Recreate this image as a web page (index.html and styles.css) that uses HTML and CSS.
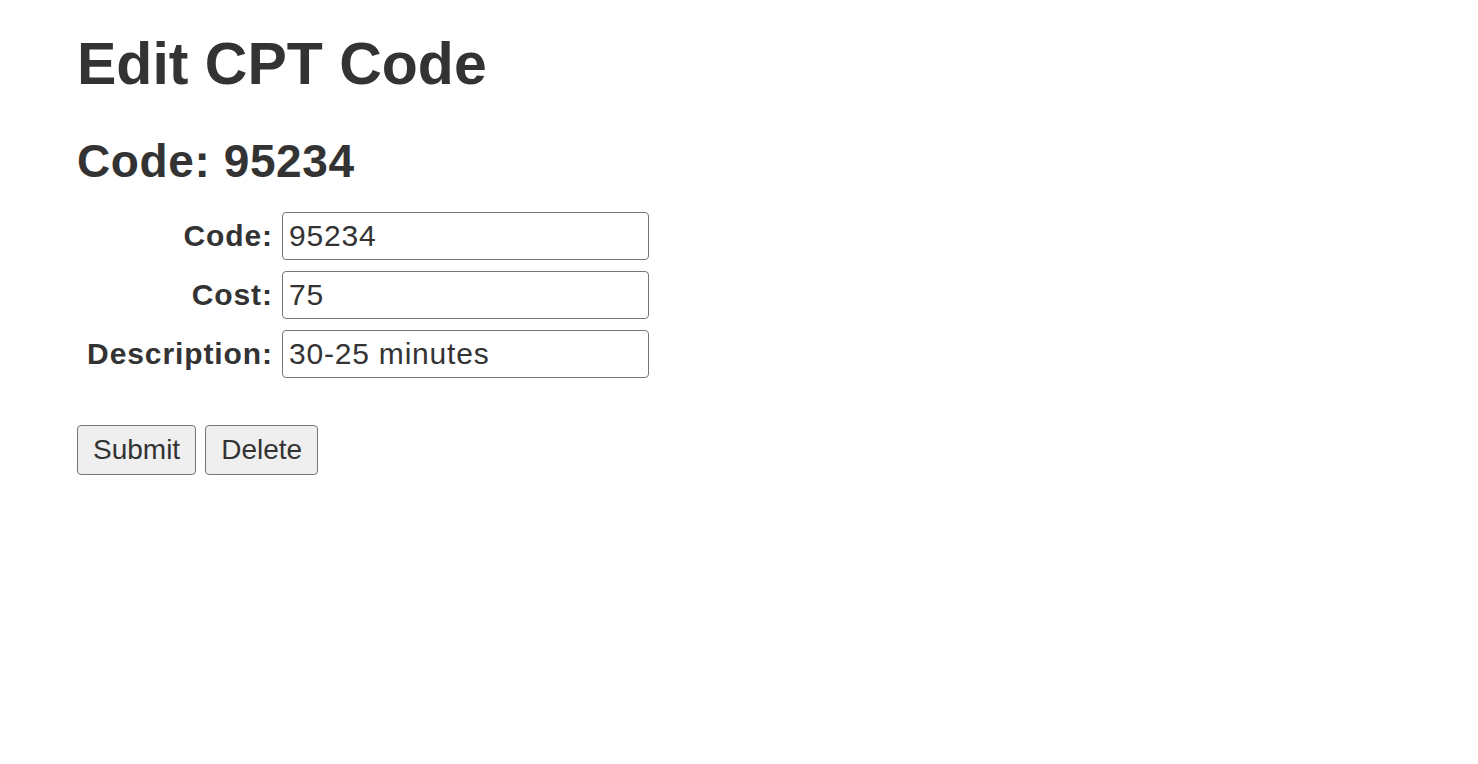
FILE: index.html
```html
<!DOCTYPE html>
<html>
<head>
<meta charset="utf-8">
<link rel="stylesheet" href="styles.css">
</head>
<body>
<main class="page">
  <h1 class="title">Edit CPT Code</h1>
  <h2 class="subtitle">Code: 95234</h2>
  <form class="form">
    <div class="fields">
      <label class="label" for="code">Code:</label>
      <input class="input" id="code" type="text" value="95234">
      <label class="label" for="cost">Cost:</label>
      <input class="input" id="cost" type="text" value="75">
      <label class="label" for="desc">Description:</label>
      <input class="input" id="desc" type="text" value="30-25 minutes">
    </div>
    <div class="actions">
      <button class="btn" type="button">Submit</button>
      <button class="btn" type="button">Delete</button>
    </div>
  </form>
</main>
</body>
</html>
```
FILE: styles.css
```css
html, body {
  margin: 0;
  padding: 0;
  background: #fff;
}
body {
  font-family: "Liberation Sans", Arial, Helvetica, sans-serif;
  color: #333;
}
.page {
  padding: 24px 0 0 77px;
}
.title {
  margin: 0;
  font-size: 59px;
  font-weight: 700;
  line-height: 80px;
}
.subtitle {
  margin: 29px 0 0 0;
  font-size: 46px;
  font-weight: 700;
  letter-spacing: 0.6px;
  line-height: 56px;
}
.form {
  margin-top: 23px;
}
.fields {
  display: grid;
  grid-template-columns: 195px 367px;
  column-gap: 10px;
  row-gap: 11px;
  align-items: center;
}
.label {
  text-align: right;
  font-size: 30px;
  font-weight: 700;
  letter-spacing: 0.9px;
  margin-right: -0.9px;
}
.input {
  box-sizing: border-box;
  width: 367px;
  height: 48px;
  margin: 0;
  padding: 0 6px;
  border: 1.5px solid #767676;
  border-radius: 4px;
  font-family: inherit;
  font-size: 30px;
  letter-spacing: 0.8px;
  color: #333;
}
.actions {
  display: flex;
  gap: 9px;
  margin-top: 47px;
}
.btn {
  box-sizing: border-box;
  height: 50px;
  padding: 0 15px;
  margin: 0;
  background: #efefef;
  border: 1.5px solid #767676;
  border-radius: 4px;
  font-family: inherit;
  font-size: 28px;
  color: #333;
}
```
